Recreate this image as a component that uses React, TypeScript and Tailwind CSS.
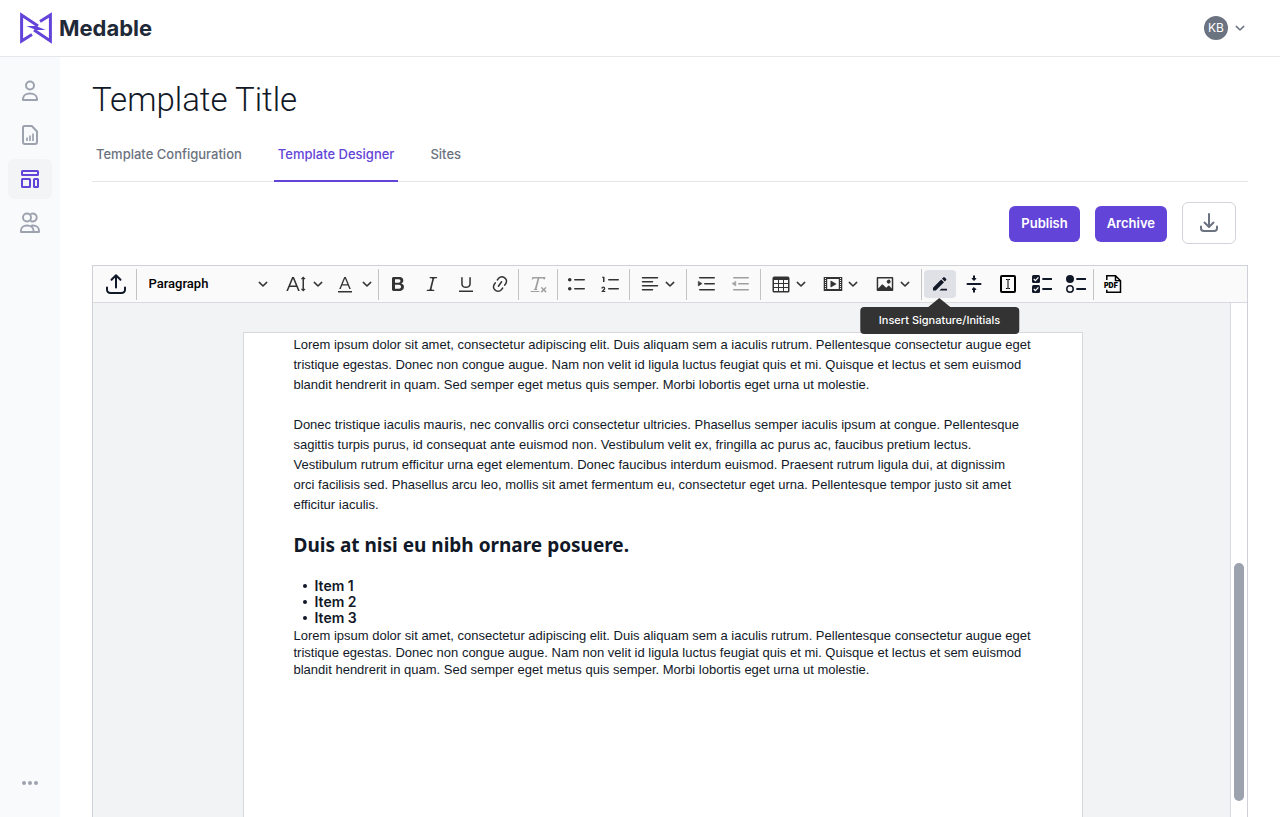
import type { ReactNode } from "react";

const FILL = {
  bold: "M10.187 17H5.773c-.637 0-1.092-.138-1.364-.415-.273-.277-.409-.718-.409-1.323V4.738c0-.617.14-1.062.419-1.332.279-.27.73-.406 1.354-.406h4.68c.69 0 1.288.041 1.793.124.506.083.96.242 1.36.478.341.197.644.447.906.75a3.262 3.262 0 0 1 .808 2.162c0 1.401-.722 2.426-2.167 3.075C15.05 10.175 16 11.315 16 13.01a3.756 3.756 0 0 1-2.296 3.504 6.1 6.1 0 0 1-1.517.377c-.571.073-1.238.11-2 .11zm-.217-6.217H7v4.087h3.069c1.977 0 2.965-.69 2.965-2.072 0-.707-.256-1.22-.768-1.537-.512-.319-1.277-.478-2.296-.478zM7 5.13v3.619h2.606c.729 0 1.292-.067 1.69-.2a1.6 1.6 0 0 0 .91-.765c.165-.267.247-.566.247-.897 0-.707-.26-1.176-.778-1.409-.519-.232-1.31-.348-2.375-.348H7z",
  italic: "m9.586 14.633.021.004c-.036.335.095.655.393.962.082.083.173.15.274.201h1.474a.6.6 0 1 1 0 1.2H5.304a.6.6 0 0 1 0-1.2h1.15c.474-.07.809-.182 1.005-.334.157-.122.291-.32.404-.597l2.416-9.55a1.053 1.053 0 0 0-.281-.823 1.12 1.12 0 0 0-.442-.296H8.15a.6.6 0 0 1 0-1.2h6.443a.6.6 0 1 1 0 1.2h-1.195c-.376.056-.65.155-.823.296-.215.175-.423.439-.623.79l-2.366 9.347z",
  underline: "M3 18v-1.5h14V18zm2.2-8V3.6c0-.4.4-.6.8-.6.3 0 .7.2.7.6v6.2c0 2 1.3 2.8 3.2 2.8 1.9 0 3.4-.9 3.4-2.9V3.6c0-.3.4-.5.8-.5.3 0 .7.2.7.5V10c0 2.7-2.2 4-4.9 4-2.6 0-4.7-1.2-4.7-4z",
  link: "m11.077 15 .991-1.416a.75.75 0 1 1 1.229.86l-1.148 1.64a.748.748 0 0 1-.217.206 5.251 5.251 0 0 1-8.503-5.955.741.741 0 0 1 .12-.274l1.147-1.639a.75.75 0 1 1 1.228.86L4.933 10.7l.006.003a3.75 3.75 0 0 0 6.132 4.294l.006.004zm5.494-5.335a.748.748 0 0 1-.12.274l-1.147 1.639a.75.75 0 1 1-1.228-.86l.86-1.23a3.75 3.75 0 0 0-6.144-4.301l-.86 1.229a.75.75 0 0 1-1.229-.86l1.148-1.64a.748.748 0 0 1 .217-.206 5.251 5.251 0 0 1 8.503 5.955zm-4.563-2.532a.75.75 0 0 1 .184 1.045l-3.155 4.505a.75.75 0 1 1-1.229-.86l3.155-4.506a.75.75 0 0 1 1.045-.184z",
  clear: "M8.69 14.915c.053.052.173.083.36.093a.366.366 0 0 1 .345.485l-.003.01a.738.738 0 0 1-.697.497h-2.67a.374.374 0 0 1-.353-.496l.013-.038a.681.681 0 0 1 .644-.458c.197-.012.325-.043.386-.093a.28.28 0 0 0 .072-.11L9.592 4.5H6.269c-.359-.017-.609.013-.75.09-.142.078-.289.265-.442.563-.192.29-.516.464-.864.464H4.17a.43.43 0 0 1-.407-.569L4.46 3h13.08l-.62 2.043a.81.81 0 0 1-.775.574h-.114a.486.486 0 0 1-.486-.486c.001-.284-.054-.464-.167-.54-.112-.076-.367-.106-.766-.091h-3.28l-2.68 10.257c-.006.074.007.127.038.158zM3 17h8a.5.5 0 1 1 0 1H3a.5.5 0 1 1 0-1zm11.299 1.17a.75.75 0 1 1-1.06-1.06l1.414-1.415-1.415-1.414a.75.75 0 0 1 1.06-1.06l1.415 1.414 1.414-1.415a.75.75 0 0 1 1.06 1.06l-1.413 1.415 1.414 1.415a.75.75 0 0 1-1.06 1.06l-1.415-1.414-1.414 1.414z",
  bullets: "M7 5.75c0 .414.336.75.75.75h9.5a.75.75 0 1 0 0-1.5h-9.5a.75.75 0 0 0-.75.75zm-6 0C1 4.784 1.777 4 2.75 4c.966 0 1.75.777 1.75 1.75 0 .966-.777 1.75-1.75 1.75C1.784 7.5 1 6.723 1 5.75zm6 9c0 .414.336.75.75.75h9.5a.75.75 0 1 0 0-1.5h-9.5a.75.75 0 0 0-.75.75zm-6 0c0-.966.777-1.75 1.75-1.75.966 0 1.75.777 1.75 1.75 0 .966-.777 1.75-1.75 1.75-.966 0-1.75-.777-1.75-1.75z",
  numbers: "M7 5.75c0 .414.336.75.75.75h9.5a.75.75 0 1 0 0-1.5h-9.5a.75.75 0 0 0-.75.75zM3.5 3v5H2V3.7H1v-1h2.5V3zM.343 17.857l2.59-3.257H2.92a.6.6 0 1 0-1.04 0H.302a2 2 0 1 1 3.995 0h-.001c-.048.405-.16.734-.333.988-.175.254-.59.692-1.244 1.312H4.3v1h-4l.043-.043zM7 14.75a.75.75 0 0 1 .75-.75h9.5a.75.75 0 1 1 0 1.5h-9.5a.75.75 0 0 1-.75-.75z",
  fontSize: "M9.816 11.5 7.038 4.785 4.261 11.5h5.555zm.62 1.5H3.641l-1.666 4.028H.312l5.789-14h1.875l5.789 14h-1.663L10.436 13zm7.55 2.279.779-.779.707.707-2.265 2.265-2.193-2.265.707-.707.765.765V4.825c0-.042 0-.083.002-.123l-.77.77-.707-.707L17.207 2.5l2.265 2.265-.707.707-.782-.782c.002.043.003.089.003.135v10.454z",
  fontColor: "M12.4 10.3 10 4.5l-2.4 5.8h4.8zm.5 1.2H7.1L5.7 15H4.2l5-12h1.6l5 12h-1.5l-1.4-3.5zM3 17h14v1.5H3z",
  table: "M3 6v3h4V6H3zm0 4v3h4v-3H3zm0 4v3h4v-3H3zm5 3h4v-3H8v3zm5 0h4v-3h-4v3zm4-4v-3h-4v3h4zm0-4V6h-4v3h4zm1.5 8a1.5 1.5 0 0 1-1.5 1.5H3A1.5 1.5 0 0 1 1.5 17V4c.222-.863 1.068-1.5 2-1.5h13c.932 0 1.778.637 2 1.5v13zM12 13v-3H8v3h4zm0-4V6H8v3h4z",
  media: "M18.68 3.03c.6 0 .59-.03.59.55v12.84c0 .59.01.56-.59.56H1.29c-.6 0-.59.03-.59-.56V3.58c0-.58-.01-.55.6-.55h17.38zM15.77 15V5H4.2v10h11.57zM2 4v1h1V4H2zm0 2v1h1V6H2zm0 2v1h1V8H2zm0 2v1h1v-1H2zm0 2v1h1v-1H2zm0 2v1h1v-1H2zM17 4v1h1V4h-1zm0 2v1h1V6h-1zm0 2v1h1V8h-1zm0 2v1h1v-1h-1zm0 2v1h1v-1h-1zm0 2v1h1v-1h-1zM7.5 7.177a.4.4 0 0 1 .593-.351l5.133 2.824a.4.4 0 0 1 0 .7l-5.133 2.824a.4.4 0 0 1-.593-.35V7.176v.001z",
  image: "M6.91 10.54c.26-.23.64-.21.88.03l3.36 3.14 2.23-2.06a.64.64 0 0 1 .87 0l2.52 2.97V4.5H3.2v10.12l3.71-4.08zm10.27-7.51c.6 0 1.09.47 1.09 1.05v11.84c0 .59-.49 1.06-1.09 1.06H2.79c-.6 0-1.09-.47-1.09-1.06V4.08c0-.58.49-1.05 1.1-1.05h14.38zm-5.22 5.56a1.96 1.96 0 1 1 3.4-1.96 1.96 1.96 0 0 1-3.4 1.96z",
};

function Glyph({ d }: { d: string }) {
  return (
    <svg viewBox="0 0 20 20" className="size-5" fill="currentColor" fillRule="evenodd" aria-hidden="true">
      <path d={d} />
    </svg>
  );
}

function Line({ children, className = "size-5", width = 1.5, box = "0 0 20 20" }: { children: ReactNode; className?: string; width?: number; box?: string }) {
  return (
    <svg viewBox={box} className={className} fill="none" stroke="currentColor" strokeWidth={width} strokeLinecap="round" strokeLinejoin="round" aria-hidden="true">
      {children}
    </svg>
  );
}

function Chevron() {
  return (
    <Line box="0 0 12 12" className="size-3" width={1.5}>
      <path d="M2.300 4.400 6 8l3.700-3.600" />
    </Line>
  );
}

function Tool({ label, children, disabled = false }: { label: string; children: ReactNode; disabled?: boolean }) {
  return (
    <button type="button" aria-label={label} disabled={disabled} className="flex h-7 w-8 shrink-0 items-center justify-center rounded-sm disabled:opacity-45">
      {children}
    </button>
  );
}

function Drop({ label, wide = false, children }: { label: string; wide?: boolean; children: ReactNode }) {
  return (
    <button type="button" aria-label={label} className={wide ? "flex h-7 shrink-0 items-center gap-1.5" : "flex h-7 shrink-0 items-center gap-1"}>
      {children}
      <Chevron />
    </button>
  );
}

const group = "flex h-[31px] shrink-0 items-center justify-center border-r border-[#c4c4c4]";

function Toolbar() {
  return (
    <div role="toolbar" aria-label="Editor toolbar" className="flex h-[37px] shrink-0 items-center border-b border-[#d8dadf] bg-[#fafafa] text-[#333]">
      <div className={`${group} w-11 pl-0.5`}>
        <button type="button" aria-label="Upload" className="text-[#111827]">
          <Line box="0 0 24 24" className="size-6" width={2}>
            <path d="M12 15.500V3.500M7.500 7.800 12 3.300l4.500 4.500M3 15.500v2.200A3.300 3.300 0 0 0 6.300 21h11.400a3.300 3.300 0 0 0 3.300-3.300v-2.200" />
          </Line>
        </button>
      </div>
      <div className={`${group} w-[242px] gap-[11px] pl-1.5`}>
        <div className="relative flex w-[126px] items-center">
          <select aria-label="Text style" className="w-full appearance-none bg-transparent font-[Roboto,sans-serif] text-[13px] font-medium text-black">
            <option>Paragraph</option>
            <option>Heading</option>
          </select>
          <span className="pointer-events-none absolute right-1.5">
            <Chevron />
          </span>
        </div>
        <Drop label="Font size" wide><Glyph d={FILL.fontSize} /></Drop>
        <Drop label="Font color" wide><Glyph d={FILL.fontColor} /></Drop>
      </div>
      <div className={`${group} w-[140px] gap-0.5`}>
        <Tool label="Bold"><Glyph d={FILL.bold} /></Tool>
        <Tool label="Italic"><Glyph d={FILL.italic} /></Tool>
        <Tool label="Underline"><Glyph d={FILL.underline} /></Tool>
        <Tool label="Link"><Glyph d={FILL.link} /></Tool>
      </div>
      <div className={`${group} w-[39px]`}>
        <Tool label="Remove format" disabled><Glyph d={FILL.clear} /></Tool>
      </div>
      <div className={`${group} w-[72px] gap-0.5`}>
        <Tool label="Bulleted list"><Glyph d={FILL.bullets} /></Tool>
        <Tool label="Numbered list"><Glyph d={FILL.numbers} /></Tool>
      </div>
      <div className={`${group} w-[57px]`}>
        <Drop label="Text alignment">
          <Line><path d="M2.500 3.750h15M2.500 7.750h10M2.500 11.750h15M2.500 15.750h10" /></Line>
        </Drop>
      </div>
      <div className={`${group} w-[74px] gap-0.5`}>
        <Tool label="Increase indent">
          <Line>
            <path d="M2.750 3.750h14.500M7.750 9.750h9.500M2.750 15.750h14.500" />
            <path d="M1.300 7.500v4.500L4.800 9.750z" fill="currentColor" strokeWidth="0.6" />
          </Line>
        </Tool>
        <Tool label="Decrease indent" disabled>
          <Line>
            <path d="M2.750 3.750h14.500M7.750 9.750h9.500M2.750 15.750h14.500" />
            <path d="M4.800 7.500v4.500L1.300 9.750z" fill="currentColor" strokeWidth="0.6" />
          </Line>
        </Tool>
      </div>
      <div className={`${group} w-[161px] gap-4`}>
        <Drop label="Insert table"><Glyph d={FILL.table} /></Drop>
        <Drop label="Insert media"><Glyph d={FILL.media} /></Drop>
        <Drop label="Insert image"><Glyph d={FILL.image} /></Drop>
      </div>
      <div className={`${group} w-[172px] gap-0.5 text-[#111827]`}>
        <div className="relative">
          <button type="button" aria-describedby="signature-tip" aria-label="Insert signature" className="flex h-7 w-8 items-center justify-center rounded-sm bg-[#e0e1e6]">
            <svg viewBox="0 0 20 20" className="size-5" fill="currentColor" aria-hidden="true">
              <path d="M3 13.700 11.200 5.500l2.800 2.800L5.800 16.500H3zM12 4.700l1.300-1.300a1 1 0 0 1 1.400 0l1.400 1.400a1 1 0 0 1 0 1.400l-1.300 1.300zM9.500 16.500l1.700-1.700H17v1.700z" />
            </svg>
          </button>
          <div id="signature-tip" role="tooltip" className="absolute left-1/2 top-full z-10 flex -translate-x-1/2 flex-col items-center">
            <svg viewBox="0 0 22 9" className="h-[9px] w-[22px] text-[#333]" fill="currentColor" aria-hidden="true">
              <path d="M11 0 22 9H0z" />
            </svg>
            <span className="whitespace-nowrap rounded-sm bg-[#333] px-[19px] py-1 text-[11px] leading-[19px] font-medium text-white">Insert Signature/Initials</span>
          </div>
        </div>
        <Tool label="Insert divider">
          <Line width={2}>
            <path d="M3.500 10h13" />
            <path d="M10 1.500v4M10 14.500v4" strokeLinecap="butt" />
            <path d="m8.300 4.800 1.700 1.700 1.700-1.700zM8.300 15.200 10 13.500l1.700 1.700z" fill="currentColor" strokeWidth="1" />
          </Line>
        </Tool>
        <Tool label="Insert text field">
          <svg viewBox="0 0 20 20" className="size-5 text-black" fill="none" stroke="currentColor" aria-hidden="true">
            <rect x="3" y="2" width="14" height="16" rx="1" strokeWidth="2" />
            <path d="M8 5.500h1.500l.5.500.5-.5H12M10 6v8M8 14.500h1.500l.5-.5.5.5H12" strokeWidth="1" />
          </svg>
        </Tool>
        <Tool label="Insert checkboxes">
          <svg viewBox="0 0 20 20" className="size-5" aria-hidden="true">
            <rect x="0" y="1" width="8" height="8" rx="1.500" fill="currentColor" />
            <rect x="0" y="11" width="8" height="8" rx="1.500" fill="currentColor" />
            <path d="m1.800 5 1.600 1.600 3-3.200M1.800 15l1.600 1.600 3-3.200" fill="none" stroke="white" strokeWidth="1.200" />
            <path d="M11 5h8.500M11 15h8.500" stroke="currentColor" strokeWidth="1.800" strokeLinecap="round" />
          </svg>
        </Tool>
        <Tool label="Insert radio buttons">
          <svg viewBox="0 0 20 20" className="size-5" aria-hidden="true">
            <circle cx="4" cy="5" r="4" fill="currentColor" />
            <circle cx="4" cy="15" r="3.200" fill="none" stroke="currentColor" strokeWidth="1.500" />
            <path d="M11 5h8.500M11 15h8.500" stroke="currentColor" strokeWidth="1.800" strokeLinecap="round" />
          </svg>
        </Tool>
      </div>
      <div className="flex items-center pl-[3px]">
        <Tool label="Export as PDF">
          <svg viewBox="0 0 20 20" className="size-5 text-black" fill="none" stroke="currentColor" strokeWidth="1.500" aria-hidden="true">
            <path d="M3.800 6V1.800h8.700l5 5V18.200H3.800V15.800M12.500 2v4.800h5" />
            <rect x="1" y="7.600" width="14.500" height="6.800" fill="#fafafa" stroke="none" />
            <text x="1" y="13.800" fontSize="7" fontWeight="900" fill="currentColor" stroke="none">PDF</text>
          </svg>
        </Tool>
      </div>
    </div>
  );
}

function SideButton({ label, active = false, children }: { label: string; active?: boolean; children: ReactNode }) {
  return (
    <button
      type="button"
      aria-label={label}
      className={active ? "flex h-10 w-11 items-center justify-center rounded-md bg-[#f3f4f6] text-[#6344d8]" : "flex h-10 w-11 items-center justify-center rounded-md text-[#9ca3af]"}
    >
      {children}
    </button>
  );
}

function Sidebar() {
  return (
    <nav aria-label="Main" className="flex w-[60px] shrink-0 flex-col items-center gap-1 bg-[#f9fafc] py-3.5">
      <SideButton label="Participants">
        <Line box="0 0 24 24" className="size-6" width={2}>
          <circle cx="12" cy="6.500" r="4" />
          <path d="M5 21v-1.200C5 16.600 8 14.500 12 14.500s7 2.100 7 5.300V21z" />
        </Line>
      </SideButton>
      <SideButton label="Reports">
        <Line box="0 0 24 24" className="size-6" width={2}>
          <path d="M6.500 3h7.300L19 8.500V19a2 2 0 0 1-2 2H7a2 2 0 0 1-2-2V4.500A1.500 1.500 0 0 1 6.500 3z" />
          <path d="M9 14.500V18M12 12.500V18M15 10.500V18" strokeWidth="1.700" strokeLinecap="butt" />
        </Line>
      </SideButton>
      <SideButton label="Templates" active>
        <Line box="0 0 24 24" className="size-6" width={2}>
          <rect x="4" y="4" width="16" height="4" rx="0.500" />
          <rect x="4" y="12" width="8" height="8" rx="0.500" />
          <rect x="16" y="12" width="4" height="8" rx="0.500" />
        </Line>
      </SideButton>
      <SideButton label="Users">
        <Line box="0 0 24 24" className="size-6" width={1.900}>
          <circle cx="9" cy="6.500" r="4" />
          <path d="M13 2.900a4 4 0 1 1 0 7.200M3 21v-1.500c0-3 2.500-5 6-5s6.500 2 6.500 5V21zM14 14.500h1c3.500 0 6 2 6 5V21h-5.500" />
        </Line>
      </SideButton>
      <div className="mt-auto">
        <SideButton label="More">
          <svg viewBox="0 0 16 4" className="h-1 w-4" fill="currentColor" aria-hidden="true">
            <circle cx="2" cy="2" r="2" />
            <circle cx="8" cy="2" r="2" />
            <circle cx="14" cy="2" r="2" />
          </svg>
        </SideButton>
      </div>
    </nav>
  );
}

function Lorem() {
  return (
    <>
      Lorem ipsum dolor sit amet, consectetur adipiscing elit. Duis aliquam sem a iaculis rutrum. Pellentesque consectetur augue eget
      <br />
      tristique egestas. Donec non congue augue. Nam non velit id ligula luctus feugiat quis et mi. Quisque et lectus et sem euismod
      <br />
      blandit hendrerit in quam. Sed semper eget metus quis semper. Morbi lobortis eget urna ut molestie.
    </>
  );
}

function Document() {
  return (
    <article className="w-[840px] shrink-0 border border-b-0 border-[#d6d8de] bg-white px-[50px] pt-0.5 font-['Liberation_Sans',Arial,sans-serif] text-[13px] text-[#111827]">
      <p className="leading-5"><Lorem /></p>
      <p className="mt-5 leading-5">
        Donec tristique iaculis mauris, nec convallis orci consectetur ultricies. Phasellus semper iaculis ipsum at congue. Pellentesque
        <br />
        sagittis turpis purus, id consequat ante euismod non. Vestibulum velit ex, fringilla ac purus ac, faucibus pretium lectus.
        <br />
        Vestibulum rutrum efficitur urna eget elementum. Donec faucibus interdum euismod. Praesent rutrum ligula dui, at dignissim
        <br />
        orci facilisis sed. Phasellus arcu leo, mollis sit amet fermentum eu, consectetur eget urna. Pellentesque tempor justo sit amet
        <br />
        efficitur iaculis.
      </p>
      <h2 className="mt-[18px] font-['Noto_Sans',sans-serif] text-[19px] leading-6 font-bold">Duis at nisi eu nibh ornare posuere.</h2>
      <ul className="mt-[21px] pl-[9px] font-[Inter,sans-serif] text-sm leading-4 font-semibold">
        {["Item 1", "Item 2", "Item 3"].map((item) => (
          <li key={item} className="flex items-center gap-2">
            <span className="size-1 rounded-full bg-[#111827]" />
            {item}
          </li>
        ))}
      </ul>
      <p className="mt-px leading-[17px]"><Lorem /></p>
    </article>
  );
}

export default function App() {
  return (
    <div className="flex h-screen flex-col overflow-hidden bg-white font-[Inter,sans-serif] text-[13px] text-[#111827]">
      <header className="flex h-[57px] shrink-0 items-center justify-between border-b border-[#e5e7eb] pr-[34px] pl-5">
        <a href="#home" className="flex items-center gap-[7px]">
          <svg viewBox="0 0 32 32" className="size-8" aria-hidden="true">
            <g fill="none" stroke="#6344d8" strokeWidth="3">
              <path d="M20 9.500 30.400 3v26L14 18" />
              <path d="M12 22.500 1.600 29V3L18 14" />
            </g>
            <path d="M6.300 13.900h9.700l9.700 4.200H16z" fill="#6344d8" />
          </svg>
          <span className="text-[22px] leading-8 font-bold text-[#1f2937]">Medable</span>
        </a>
        <button type="button" aria-label="Account menu" className="flex items-center gap-1.5 text-[#6b7280]">
          <span className="flex size-6 items-center justify-center rounded-full bg-[#6b7280] text-xs text-white">KB</span>
          <Chevron />
        </button>
      </header>
      <div className="flex min-h-0 flex-1">
        <Sidebar />
        <main className="flex min-w-0 flex-1 flex-col px-8 pt-5">
          <h1 className="font-[Roboto,sans-serif] text-[33px] leading-[46px] font-light">Template Title</h1>
          <div role="tablist" className="mt-2 flex h-[51px] shrink-0 items-stretch gap-7 border-b border-[#e5e7eb] font-medium text-[#6b7280]">
            <button type="button" role="tab" aria-selected="false" className="-mb-px border-b-2 border-transparent px-1 pb-0.5">Template Configuration</button>
            <button type="button" role="tab" aria-selected="true" className="-mb-px border-b-2 border-[#6344d8] px-1 pb-0.5 text-[#6344d8]">Template Designer</button>
            <button type="button" role="tab" aria-selected="false" className="-mb-px border-b-2 border-transparent px-1 pb-0.5">Sites</button>
          </div>
          <div className="mt-5 flex shrink-0 items-end justify-end gap-[15px] pr-3">
            <button type="button" className="mb-0.5 h-9 rounded-md bg-[#6344d8] px-3 font-semibold text-white">Publish</button>
            <button type="button" className="mb-0.5 h-9 rounded-md bg-[#6344d8] px-3 font-semibold text-white">Archive</button>
            <button type="button" aria-label="Download" className="flex h-[42px] w-[54px] items-center justify-center rounded-md border border-[#d1d5db] text-[#6b7280]">
              <Line box="0 0 24 24" className="size-6" width={2}>
                <path d="M12 3v12.500M7.500 11.500l4.500 4.500 4.500-4.500M4 15.500v1.700A2.800 2.800 0 0 0 6.800 20h10.400a2.800 2.800 0 0 0 2.800-2.800v-1.700" />
              </Line>
            </button>
          </div>
          <section aria-label="Template editor" className="mt-[21px] flex min-h-0 flex-1 flex-col border border-b-0 border-[#cfd1d8]">
            <Toolbar />
            <div className="flex min-h-0 flex-1">
              <div className="flex min-w-0 flex-1 justify-center overflow-hidden bg-[#f2f3f5] pt-[29px] pl-0.5">
                <Document />
              </div>
              <div className="flex w-[17px] shrink-0 flex-col items-center justify-end border-l border-[#d8dadf] pb-4">
                <div className="h-[238px] w-2.5 rounded-full bg-[#9ca3af]" />
              </div>
            </div>
          </section>
        </main>
      </div>
    </div>
  );
}
